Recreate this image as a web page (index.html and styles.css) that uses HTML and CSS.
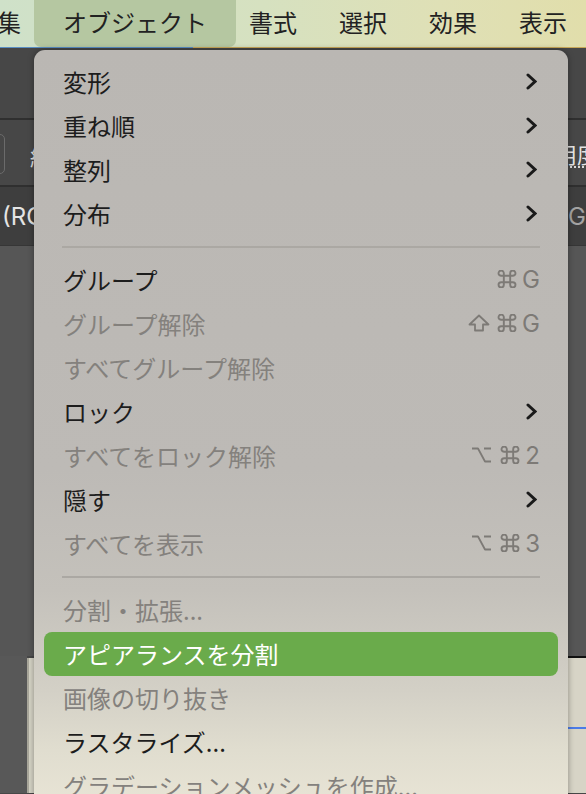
FILE: index.html
```html
<!DOCTYPE html>
<html lang="ja">
<head>
  <meta charset="UTF-8">
  <meta name="viewport" content="width=device-width, initial-scale=1.0">
  <title>オブジェクト メニュー</title>
  <link rel="stylesheet" href="styles.css">
</head>
<body>

<div class="screen">
  <div class="menubar">
    <span class="mb-item first">集</span>
    <span class="mb-item active">オブジェクト</span>
    <span class="mb-item">書式</span>
    <span class="mb-item">選択</span>
    <span class="mb-item">効果</span>
    <span class="mb-item">表示</span>
  </div>

  <div class="workspace">
    <div class="ws-row ws-top"></div>
    <div class="ws-row ws-ctrl">
      <span class="ctrl-box"></span>
      <span class="ctrl-label">編</span>
      <span class="ctrl-right"><span class="dotted">用度</span></span>
    </div>
    <div class="ws-row ws-info">
      <span class="info-left">(RGB</span>
      <span class="info-right">GPU</span>
    </div>
    <div class="ws-canvas"></div>
    <div class="ws-bottom">
      <div class="strip"></div>
      <div class="doc-panel"></div>
      <div class="side-panel"><div class="side-line"></div></div>
    </div>
  </div>

  <div class="dropdown">
    <div class="item">
      <span class="label">変形</span>
      <svg class="chev" width="11" height="17" viewBox="0 0 11 17"><path d="M2 2 L9 8.5 L2 15"/></svg>
    </div>
    <div class="item">
      <span class="label">重ね順</span>
      <svg class="chev" width="11" height="17" viewBox="0 0 11 17"><path d="M2 2 L9 8.5 L2 15"/></svg>
    </div>
    <div class="item">
      <span class="label">整列</span>
      <svg class="chev" width="11" height="17" viewBox="0 0 11 17"><path d="M2 2 L9 8.5 L2 15"/></svg>
    </div>
    <div class="item">
      <span class="label">分布</span>
      <svg class="chev" width="11" height="17" viewBox="0 0 11 17"><path d="M2 2 L9 8.5 L2 15"/></svg>
    </div>

    <div class="sep"></div>

    <div class="item">
      <span class="label">グループ</span>
      <span class="keys">
        <svg class="sym cmd" width="20" height="18" viewBox="1.5 1.5 17 17"><path d="M7 7V4.5A2.5 2.5 0 1 0 4.5 7H15.5A2.5 2.5 0 1 0 13 4.5V15.5A2.5 2.5 0 1 0 15.5 13H4.5A2.5 2.5 0 1 0 7 15.5Z"/></svg>
        <span class="key">G</span>
      </span>
    </div>
    <div class="item disabled">
      <span class="label">グループ解除</span>
      <span class="keys">
        <svg class="sym shift" width="22" height="18" viewBox="0 0 22 18"><path d="M11 1.5 L20.5 10.5 H15 V16.5 H7 V10.5 H1.5 Z"/></svg>
        <svg class="sym cmd" width="20" height="18" viewBox="1.5 1.5 17 17"><path d="M7 7V4.5A2.5 2.5 0 1 0 4.5 7H15.5A2.5 2.5 0 1 0 13 4.5V15.5A2.5 2.5 0 1 0 15.5 13H4.5A2.5 2.5 0 1 0 7 15.5Z"/></svg>
        <span class="key">G</span>
      </span>
    </div>
    <div class="item disabled">
      <span class="label">すべてグループ解除</span>
    </div>
    <div class="item">
      <span class="label">ロック</span>
      <svg class="chev" width="11" height="17" viewBox="0 0 11 17"><path d="M2 2 L9 8.5 L2 15"/></svg>
    </div>
    <div class="item disabled">
      <span class="label">すべてをロック解除</span>
      <span class="keys">
        <svg class="sym opt" width="21" height="18" viewBox="0 0 21 18"><path d="M1 2.5 H7 L14 15.5 H20 M13 2.5 H20"/></svg>
        <svg class="sym cmd" width="20" height="18" viewBox="1.5 1.5 17 17"><path d="M7 7V4.5A2.5 2.5 0 1 0 4.5 7H15.5A2.5 2.5 0 1 0 13 4.5V15.5A2.5 2.5 0 1 0 15.5 13H4.5A2.5 2.5 0 1 0 7 15.5Z"/></svg>
        <span class="key">2</span>
      </span>
    </div>
    <div class="item">
      <span class="label">隠す</span>
      <svg class="chev" width="11" height="17" viewBox="0 0 11 17"><path d="M2 2 L9 8.5 L2 15"/></svg>
    </div>
    <div class="item disabled">
      <span class="label">すべてを表示</span>
      <span class="keys">
        <svg class="sym opt" width="21" height="18" viewBox="0 0 21 18"><path d="M1 2.5 H7 L14 15.5 H20 M13 2.5 H20"/></svg>
        <svg class="sym cmd" width="20" height="18" viewBox="1.5 1.5 17 17"><path d="M7 7V4.5A2.5 2.5 0 1 0 4.5 7H15.5A2.5 2.5 0 1 0 13 4.5V15.5A2.5 2.5 0 1 0 15.5 13H4.5A2.5 2.5 0 1 0 7 15.5Z"/></svg>
        <span class="key">3</span>
      </span>
    </div>

    <div class="sep"></div>

    <div class="item disabled">
      <span class="label">分割・拡張...</span>
    </div>
    <div class="item selected">
      <span class="label">アピアランスを分割</span>
    </div>
    <div class="item disabled">
      <span class="label">画像の切り抜き</span>
    </div>
    <div class="item">
      <span class="label">ラスタライズ...</span>
    </div>
    <div class="item disabled">
      <span class="label">グラデーションメッシュを作成...</span>
    </div>
    <div class="item">
      <span class="label">オブジェクトのモザイク...</span>
    </div>
  </div>
</div>

</body>
</html>
```

FILE: styles.css
```css
body {
  margin: 0;
  font-family: "Noto Sans CJK JP", "Noto Sans", sans-serif;
  background: #474747;
}

.screen {
  position: relative;
  width: 586px;
  height: 794px;
  overflow: hidden;
}

/* top menu bar */
.menubar {
  display: flex;
  align-items: center;
  height: 48px;
  padding-bottom: 4px;
  box-sizing: border-box;
  background: linear-gradient(to right, #cfe1c9 0%, #d6e1c0 45%, #dfe0b6 75%, #e1deab 100%);
  border-bottom: 1px solid #c9a858;
  position: relative;
  color: #222;
  font-size: 24px;
  white-space: nowrap;
}

.menubar::after {
  content: "";
  position: absolute;
  left: 0;
  bottom: -1px;
  width: 193px;
  height: 1px;
  background: #5a8fc4;
}

.mb-item {
  padding: 0 21px;
  line-height: 40px;
}

.mb-item.first {
  margin-left: -3px;
  padding-left: 0;
}

.mb-item.active {
  padding: 0 29px;
  margin: 0 -8px;
  height: 47px;
  line-height: 43px;
  align-self: flex-start;
  background: #b5c7a1;
  border-radius: 0 0 7px 7px;
}

/* dark app window behind the menu */
.workspace {
  display: flex;
  flex-direction: column;
  color: #e4e4e4;
}

.ws-row {
  display: flex;
  align-items: center;
}

.ws-top {
  height: 70px;
  background: #474747;
}

.ws-ctrl {
  height: 65px;
  background: #474747;
  border-top: 2px solid #2f2f2f;
}

.ctrl-box {
  width: 22px;
  height: 38px;
  margin-left: -19px;
  margin-top: 3px;
  border: 1px solid #6b6b6b;
  border-radius: 5px;
}

.ctrl-label {
  margin-left: 25px;
  margin-top: 8px;
  font-size: 23px;
}

.ctrl-right {
  margin-left: auto;
  width: 31px;
  overflow: hidden;
  white-space: nowrap;
  font-size: 22px;
}

.dotted {
  display: inline-block;
  border-bottom: 2px dotted #d8d8d8;
  line-height: 26px;
}

.ws-info {
  height: 58px;
  background: #3e3e3e;
  border-top: 2px solid #2f2f2f;
  font-family: "Inter", "Liberation Sans", sans-serif;
  font-size: 24px;
}

.info-left {
  margin-left: 2px;
}

.info-right {
  margin-left: auto;
  width: 18px;
  overflow: hidden;
  color: #a3a3a3;
}

.ws-canvas {
  height: 410px;
  background: #565656;
  border-top: 1px solid #363636;
}

.ws-bottom {
  display: flex;
  height: 137px;
}

.strip {
  width: 27px;
  background: #585858;
}

.doc-panel {
  flex: 1;
  margin-top: 2px;
  background: #d6d4c6;
  border-left: 2px solid #a9a79b;
}

.side-panel {
  width: 18px;
  background: #d7d4c6;
  border-top: 2px solid #111;
}

.side-line {
  margin-top: 69px;
  height: 2px;
  background: #4b7be8;
}

/* the open dropdown */
.dropdown {
  position: absolute;
  left: 34px;
  top: 50px;
  width: 534px;
  box-sizing: border-box;
  padding: 10px 10px;
  border-radius: 11px 11px 0 0;
  background: linear-gradient(to bottom, #bab7b3 0px, #bdbab6 420px, #c4c1bb 540px, #d3d0c6 640px, #e0ddcf 700px, #e9e5d6 760px);
  box-shadow: 0 0 6px rgba(0, 0, 0, 0.35);
}

.item {
  display: flex;
  align-items: center;
  height: 44px;
  padding: 0 19px 2px;
  box-sizing: border-box;
  border-radius: 8px;
  font-size: 24px;
  color: #1d1d1d;
  white-space: nowrap;
}

.item .label {
  flex: 1;
}

.item.disabled {
  color: #84817d;
}

.item.selected {
  background: #6aab4b;
  color: #fff;
}

.chev {
  margin-right: 2px;
}

.chev path {
  fill: none;
  stroke: #1a1a1a;
  stroke-width: 3;
  stroke-linecap: round;
  stroke-linejoin: miter;
}

.keys {
  display: flex;
  align-items: center;
  color: #7d7a76;
}

.sym path {
  fill: none;
  stroke: #7d7a76;
  stroke-width: 1.8;
  stroke-linejoin: round;
}

.sym.shift {
  margin-right: 7px;
}

.sym.opt {
  margin-right: 8px;
}

.sym.cmd {
  margin-right: 5px;
}

.key {
  font-family: "Inter", "Liberation Sans", sans-serif;
  font-size: 24px;
  margin-right: -1px;
}

.sep {
  height: 22px;
  margin: 0 18px;
  box-sizing: border-box;
  padding-top: 10px;
}

.sep::before {
  content: "";
  display: block;
  height: 2px;
  background: #aba8a3;
}
```
